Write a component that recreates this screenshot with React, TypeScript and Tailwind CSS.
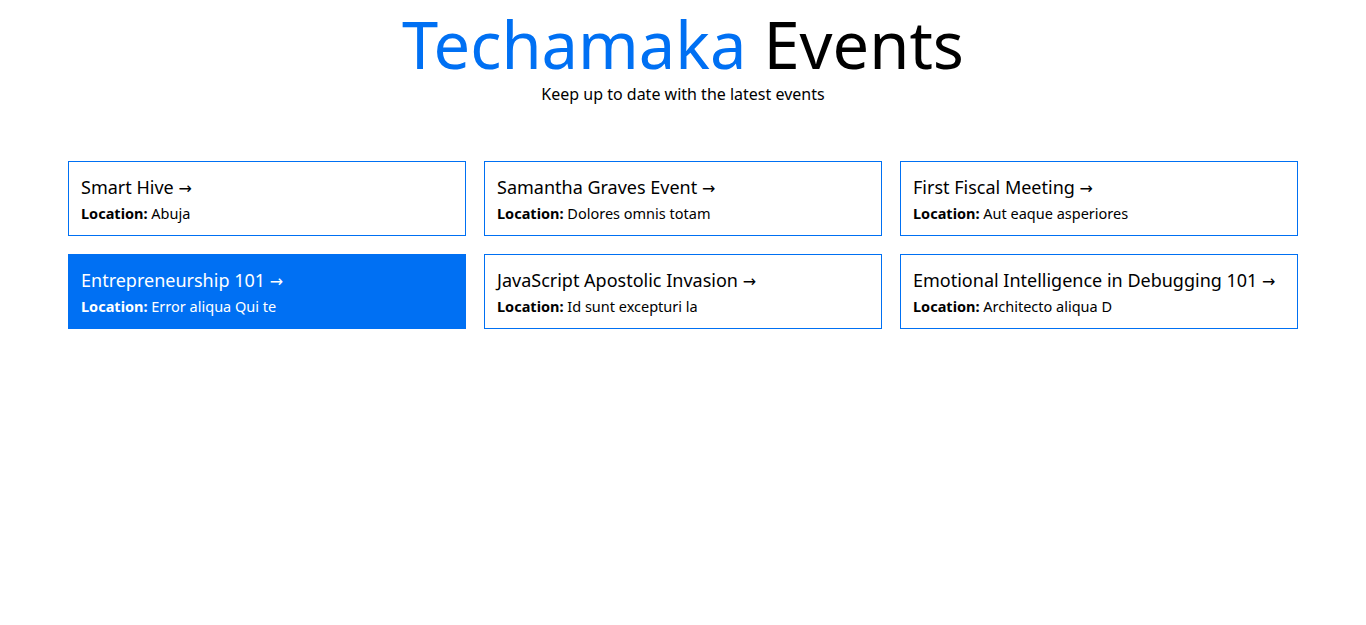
import React from 'react';

interface EventItem {
  title: string;
  location: string;
}

const events: EventItem[] = [
  { title: 'Smart Hive', location: 'Abuja' },
  { title: 'Samantha Graves Event', location: 'Dolores omnis totam' },
  { title: 'First Fiscal Meeting', location: 'Aut eaque asperiores' },
  { title: 'Entrepreneurship 101', location: 'Error aliqua Qui te' },
  { title: 'JavaScript Apostolic Invasion', location: 'Id sunt excepturi la' },
  { title: 'Emotional Intelligence in Debugging 101', location: 'Architecto aliqua D' },
];

const EventCard: React.FC<{ item: EventItem; active?: boolean }> = ({ item, active }) => {
  return (
    <a
      href="#"
      className={`block h-[75px] border border-[#0070f3] px-3 pt-[12px] ${
        active ? 'bg-[#0070f3] text-white' : 'bg-white text-black'
      }`}
    >
      <h3 className="text-[18px] leading-[26px]">
        {item.title} <span className="font-['DejaVu_Sans',sans-serif] text-[16px]">&rarr;</span>
      </h3>
      <p className="text-[14.5px] leading-[22px]">
        <strong className="font-bold">Location:</strong> {item.location}
      </p>
    </a>
  );
};

export default function App() {
  return (
    <div className="min-h-screen bg-white font-['Noto_Sans',sans-serif]">
      <header className="text-center pt-[4px]">
        <h1 className="text-[65px] leading-[80px]">
          <span className="text-[#0070f3]">Techamaka</span> <span className="text-black">Events</span>
        </h1>
        <p className="text-[16px] leading-[20px] text-black">Keep up to date with the latest events</p>
      </header>

      <main className="mx-auto w-[1230px] mt-[57px] grid grid-cols-3 gap-[18px]">
        {events.map((e, i) => (
          <EventCard key={e.title} item={e} active={i === 3} />
        ))}
      </main>
    </div>
  );
}
